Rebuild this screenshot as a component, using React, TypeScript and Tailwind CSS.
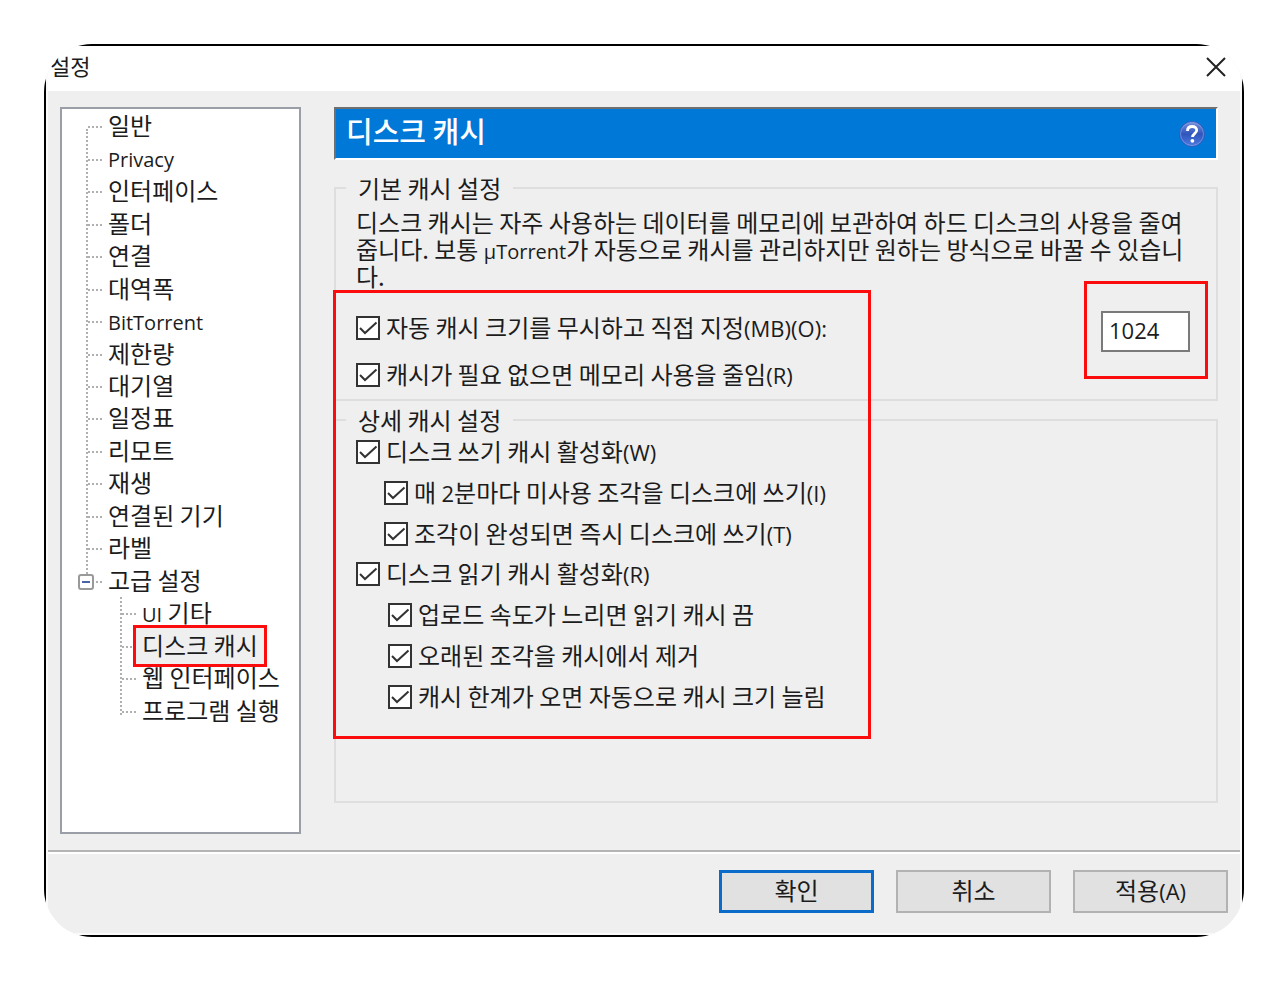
import React, { useState } from "react";

interface TreeItem {
  label: React.ReactNode;
  child?: boolean;
  parent?: boolean;
  marked?: boolean;
}

interface CheckProps {
  children: React.ReactNode;
  className?: string;
}

const Word = ({ children }: { children: string }) => (
  <span className="font-['Open_Sans',sans-serif] text-[20px] leading-none">{children}</span>
);

const Key = ({ children }: { children: string }) => (
  <span className="font-['Open_Sans',sans-serif] text-[22px] leading-none">{children}</span>
);

const treeItems: TreeItem[] = [
  { label: "일반" },
  { label: <Word>Privacy</Word> },
  { label: "인터페이스" },
  { label: "폴더" },
  { label: "연결" },
  { label: "대역폭" },
  { label: <Word>BitTorrent</Word> },
  { label: "제한량" },
  { label: "대기열" },
  { label: "일정표" },
  { label: "리모트" },
  { label: "재생" },
  { label: "연결된 기기" },
  { label: "라벨" },
  { label: "고급 설정", parent: true },
  { label: <><Word>UI</Word> 기타</>, child: true },
  { label: "디스크 캐시", child: true, marked: true },
  { label: "웹 인터페이스", child: true },
  { label: "프로그램 실행", child: true },
];

const Check = ({ children, className = "" }: CheckProps) => (
  <label className={`flex items-center gap-[6px] whitespace-nowrap ${className}`}>
    <span className="relative size-6 shrink-0">
      <input
        type="checkbox"
        defaultChecked
        className="peer block size-6 appearance-none border-2 border-[#333333] bg-white"
      />
      <svg
        viewBox="0 0 24 24"
        className="pointer-events-none absolute inset-0 hidden size-6 peer-checked:block"
        fill="none"
        stroke="#333333"
        strokeWidth="2"
      >
        <path d="M4 12l5 5L20.500 6.500" />
      </svg>
    </span>
    <span className="pb-[2px]">{children}</span>
  </label>
);

const SettingsTree = () => (
  <nav className="relative w-[241px] shrink-0 border-2 border-[#9a9ea7] bg-white pt-[2px]">
    <div className="absolute top-5 left-6 h-[448px] border-l-2 border-dotted border-[#b0b0b0]" />
    <div className="absolute top-[488px] left-[58px] h-[118px] border-l-2 border-dotted border-[#b0b0b0]" />
    <ul className="grid h-[617px] auto-rows-fr">
      {treeItems.map((item, i) => (
        <li
          key={i}
          className={`flex items-center whitespace-nowrap ${item.child ? "pl-[60px]" : item.parent ? "pl-4" : "pl-[26px]"}`}
        >
          {item.parent && (
            <button
              aria-label="접기"
              className="relative mr-[2px] flex size-4 items-center justify-center rounded-[3px] border-2 border-[#999999] bg-white"
            >
              <span className="h-[2px] w-2 bg-[#4a62a8]" />
            </button>
          )}
          <span
            className={`border-t-2 border-dotted border-[#b0b0b0] ${item.parent ? "w-[6px]" : "w-[14px]"}`}
          />
          {item.marked ? (
            <a href="#" className="relative z-0 ml-[6px] pb-1">
              <span className="absolute -inset-x-[9px] -top-2 -bottom-[6px] -z-10 border-[3px] border-[#fb0d0d] bg-[#efefef]" />
              {item.label}
            </a>
          ) : (
            <a href="#" className="ml-[6px] pb-1">{item.label}</a>
          )}
        </li>
      ))}
    </ul>
  </nav>
);

const HelpIcon = () => (
  <svg viewBox="0 0 28 28" className="size-7">
    <defs>
      <linearGradient id="help" x1="0" y1="0" x2="0" y2="1">
        <stop offset="0" stopColor="#7d93dc" />
        <stop offset="0.5" stopColor="#2f55bd" />
        <stop offset="1" stopColor="#4f7ce0" />
      </linearGradient>
    </defs>
    <circle cx="14" cy="14" r="12.500" fill="url(#help)" stroke="#2c5fc0" />
    <circle cx="14" cy="14" r="11.500" fill="none" stroke="#8fa6e6" strokeOpacity="0.6" />
    <path
      d="M9.500 11c0-3 2-4.500 4.700-4.500 2.600 0 4.500 1.500 4.500 3.800 0 3.200-4.200 3.400-4.200 6.700"
      fill="none"
      stroke="#ffffff"
      strokeWidth="2.800"
    />
    <circle cx="14.400" cy="20.800" r="1.900" fill="#ffffff" />
  </svg>
);

const App = () => {
  const [size, setSize] = useState("1024");

  return (
    <div className="min-w-[1240px] bg-white p-11 font-['Noto_Sans_CJK_KR',sans-serif] text-[24px] leading-6 text-[#1c1c1c]">
      <div className="overflow-hidden rounded-[48px]">
        <div className="border-2 border-black bg-[#efefef]">
          <div className="border-x-2 border-b-2 border-[#fafafa]">
            <header className="flex h-[45px] items-center justify-between bg-white pr-[14px] pb-1 pl-[2px]">
              <h1 className="pb-1 text-[22px]">설정</h1>
              <button aria-label="닫기">
                <svg viewBox="0 0 20 20" className="size-5" stroke="#222222" strokeWidth="2">
                  <path d="M1 1l18 18M19 1L1 19" />
                </svg>
              </button>
            </header>

            <main className="flex gap-[33px] pt-4 pr-[22px] pb-4 pl-3">
              <SettingsTree />

              <section className="relative min-w-0 flex-1 pb-[31px]">
                <div className="flex h-[53px] items-center justify-between border-2 border-t-[#6f6f6f] border-r-white border-b-white border-l-[#6f6f6f] bg-[#0078d7] pr-[10px] pl-[10px]">
                  <h2 className="pb-2 text-[29px] font-medium text-white">디스크 캐시</h2>
                  <button aria-label="도움말">
                    <HelpIcon />
                  </button>
                </div>

                <fieldset className="mt-4 border-2 border-[#dedede] pr-5 pb-[7px] pl-5">
                  <legend className="-ml-[10px] px-3">기본 캐시 설정</legend>
                  <p className="pt-2 leading-[27px]">
                    디스크 캐시는 자주 사용하는 데이터를 메모리에 보관하여 하드 디스크의 사용을 줄여
                    줍니다. 보통 <Word>µTorrent</Word>가 자동으로 캐시를 관리하지만 원하는 방식으로 바꿀 수 있습니다.
                  </p>
                  <div className="mt-[22px] flex items-start justify-between pr-[6px]">
                    <Check className="h-[34px]">
                      자동 캐시 크기를 무시하고 직접 지정<Key>(MB)(O):</Key>
                    </Check>
                    <div className="relative">
                      <input
                        aria-label="캐시 크기"
                        value={size}
                        onChange={(e) => setSize(e.target.value)}
                        className="block h-[41px] w-[89px] border-2 border-[#7a7a7a] bg-white pb-1 pl-[6px] font-['Open_Sans',sans-serif] text-[22px]"
                      />
                      <div className="pointer-events-none absolute -top-[30px] -right-[18px] -bottom-[27px] -left-[17px] border-[3px] border-[#fb0d0d]" />
                    </div>
                  </div>
                  <Check className="mt-[6px] h-[34px]">
                    캐시가 필요 없으면 메모리 사용을 줄임<Key>(R)</Key>
                  </Check>
                </fieldset>

                <fieldset className="mt-[7px] border-2 border-[#dedede] pr-5 pb-[84px] pl-5">
                  <legend className="-ml-[10px] px-3">상세 캐시 설정</legend>
                  <div className="grid h-[285px] auto-rows-fr">
                    <Check>디스크 쓰기 캐시 활성화<Key>(W)</Key></Check>
                    <Check className="pl-7">
                      매 <Key>2</Key>분마다 미사용 조각을 디스크에 쓰기<Key>(I)</Key>
                    </Check>
                    <Check className="pl-7">조각이 완성되면 즉시 디스크에 쓰기<Key>(T)</Key></Check>
                    <Check>디스크 읽기 캐시 활성화<Key>(R)</Key></Check>
                    <Check className="pl-8">업로드 속도가 느리면 읽기 캐시 끔</Check>
                    <Check className="pl-8">오래된 조각을 캐시에서 제거</Check>
                    <Check className="pl-8">캐시 한계가 오면 자동으로 캐시 크기 늘림</Check>
                  </div>
                </fieldset>

                <div className="pointer-events-none absolute top-[183px] -left-px h-[449px] w-[538px] border-[3px] border-[#fb0d0d]" />
              </section>
            </main>

            <footer className="flex justify-end gap-[22px] border-t-2 border-[#b4b4b4] pt-[18px] pr-3 pb-5 shadow-[inset_0_2px_0_#ffffff]">
              <button className="h-[43px] w-[155px] border-[3px] border-[#0a6cc8] bg-[#e1e1e1] pb-1">확인</button>
              <button className="h-[43px] w-[155px] border-2 border-[#b2b2b2] bg-[#e1e1e1] pb-1">취소</button>
              <button className="h-[43px] w-[155px] border-2 border-[#b2b2b2] bg-[#e1e1e1] pb-1">
                적용<Key>(A)</Key>
              </button>
            </footer>
          </div>
        </div>
      </div>
    </div>
  );
};

export default App;
